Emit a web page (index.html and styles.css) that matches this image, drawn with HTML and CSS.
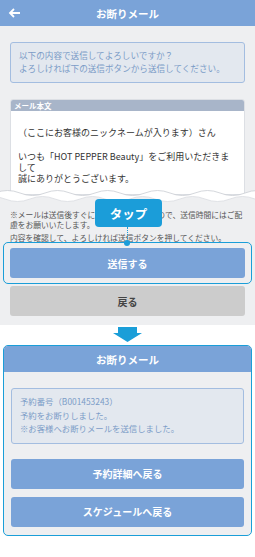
FILE: index.html
```html
<!DOCTYPE html>
<html lang="ja">

<head>
    <meta name="viewport" content="width=device-width, initial-scale=1.0">
    <title>お断りメール</title>
    <link rel="stylesheet" href="styles.css">
</head>

<body>
    <!-- 送信前の画面 -->
    <div class="tela">
        <header class="barra">
            <svg class="voltar" width="13" height="10" viewBox="0 0 13 10">
                <path d="M12 5H2M6 1L2 5L6 9" fill="none" stroke="#fff" stroke-width="1.8"/>
            </svg>
            <h1>お断りメール</h1>
        </header>

        <div class="conteudo">
            <p class="aviso">以下の内容で送信してよろしいですか？<br>よろしければ下の送信ボタンから送信してください。</p>

            <div class="email">
                <div class="email-titulo">メール本文</div>
                <div class="email-corpo">
                    <p>（ここにお客様のニックネームが入ります）さん</p>
                    <p>いつも「HOT PEPPER Beauty」をご利用いただきま<br>して<br>誠にありがとうございます。</p>
                </div>
            </div>

            <!-- recorte ondulado do papel -->
            <svg class="rasgo" width="255" height="16" viewBox="0 0 255 16">
                <path d="M-5 5q12.5 -5 25 0t25 0t25 0t25 0t25 0t25 0t25 0t25 0t25 0t25 0t25 0V16H-5Z" fill="#fff"/>
                <path d="M-20 11q12.5 -5 25 0t25 0t25 0t25 0t25 0t25 0t25 0t25 0t25 0t25 0t25 0V16H-20Z" fill="#eeeff1"/>
                <path d="M-5 5q12.5 -5 25 0t25 0t25 0t25 0t25 0t25 0t25 0t25 0t25 0t25 0t25 0" fill="none" stroke="#c9cdd3" stroke-width="0.8"/>
                <path d="M-20 11q12.5 -5 25 0t25 0t25 0t25 0t25 0t25 0t25 0t25 0t25 0t25 0t25 0" fill="none" stroke="#d9dce1" stroke-width="0.8"/>
            </svg>

            <div class="notas">
                <p>※メールは送信後すぐに自動送信されますので、送信時間にはご配慮をお願いいたします。</p>
                <p>内容を確認して、よろしければ送信ボタンを押してください。</p>
            </div>

            <div class="foco">
                <div class="toque">タップ</div>
                <span class="ponto"></span>
                <button class="botao">送信する</button>
            </div>
            <button class="botao botao-cinza">戻る</button>
        </div>
    </div>

    <!-- seta para baixo -->
    <div class="seta">
        <svg width="29" height="15" viewBox="0 0 29 15">
            <path d="M5 0H24V6H29L14.5 15L0 6H5Z" fill="#1a9ed8"/>
        </svg>
    </div>

    <!-- Resultado -->
    <div class="resultado">
        <header class="barra">
            <h1>お断りメール</h1>
        </header>
        <div class="resultado-corpo">
            <p class="aviso aviso-resultado">予約番号（B001453243）<br>予約をお断りしました。<br>※お客様へお断りメールを送信しました。</p>
            <button class="botao botao-primeiro">予約詳細へ戻る</button>
            <button class="botao botao-segundo">スケジュールへ戻る</button>
        </div>
    </div>
</body>

</html>
```

FILE: styles.css
```css
* {
    box-sizing: border-box;
}

body {
    margin: 0;
    width: 255px;
    background-color: #fff;
    font-family: "Noto Sans CJK JP", "Noto Sans", sans-serif;
}

.tela {
    background-color: #eeeff1;
}

.barra {
    display: grid;
    grid-template-columns: 26px 1fr 26px;
    align-items: center;
    height: 26px;
    background-color: #7aa3d8;
    color: white;
}

.barra h1 {
    grid-column: 2;
    margin: 0;
    font-size: 10.5px;
    font-weight: bold;
    text-align: center;
}

.voltar {
    display: block;
    margin-left: 8px;
}

.conteudo {
    padding: 16px 10px 9px;
}

.aviso {
    margin: 0;
    padding: 6px 8px 7px;
    border: 1px solid #a3bde0;
    border-radius: 3px;
    background-color: #e3e8ef;
    color: #7b9cc7;
    font-size: 8.6px;
    line-height: 13px;
}

.email {
    margin-top: 16px;
    background-color: white;
    border: 1px solid #dcdfe4;
    border-radius: 3px 3px 0 0;
    overflow: hidden;
}

.email-titulo {
    height: 11px;
    padding-left: 3px;
    line-height: 11px;
    font-size: 7.5px;
    font-weight: bold;
    color: white;
    background-color: #a8b5c9;
}

.email-corpo {
    padding: 16px 7px 10px;
    font-size: 9px;
    color: #333;
}

.email-corpo p {
    margin: 0;
    line-height: 11px;
}

.email-corpo p + p {
    margin-top: 13px;
}

.rasgo {
    display: block;
    margin: -7px -10px 0;
}

.notas {
    margin-top: 6px;
    font-size: 7.75px;
    color: #555;
}

.notas p {
    margin: 0;
    line-height: 10px;
}

.notas p + p {
    margin-top: 3px;
}

.foco {
    position: relative;
    margin: -1px -7px 0;
    padding: 5px 6px;
    border: 1px solid #1a9ed8;
    border-radius: 5px;
}

.toque {
    position: absolute;
    left: 91px;
    top: -44px;
    width: 67px;
    height: 28px;
    display: flex;
    align-items: center;
    justify-content: center;
    background-color: #1b9dd9;
    border-radius: 4px;
    color: white;
    font-size: 12.5px;
    font-weight: bold;
}

.toque::after {
    content: "";
    position: absolute;
    left: 32px;
    top: 100%;
    height: 16px;
    border-left: 1px dotted #1b9dd9;
}

.ponto {
    position: absolute;
    left: 120px;
    top: -3px;
    width: 6px;
    height: 6px;
    border-radius: 50%;
    background-color: #1b9dd9;
}

.botao {
    display: block;
    width: 100%;
    height: 30px;
    border: none;
    border-radius: 3px;
    background-color: #7aa3d8;
    color: white;
    font-family: inherit;
    font-size: 10px;
    font-weight: bold;
}

.botao-cinza {
    margin-top: 2px;
    background-color: #cccccc;
    color: #444;
}

.seta {
    display: flex;
    justify-content: center;
    padding: 2px 0 3px;
}

.seta svg {
    display: block;
}

.resultado {
    margin: 0 3px;
    border: 1px solid #1a9ed8;
    border-radius: 5px;
    overflow: hidden;
    background-color: #eeeff1;
}

.resultado-corpo {
    padding: 16px 7px 8px;
}

.aviso-resultado {
    font-size: 8.4px;
    line-height: 13.5px;
}

.botao-primeiro {
    margin-top: 15px;
}

.botao-segundo {
    margin-top: 8px;
}
```
